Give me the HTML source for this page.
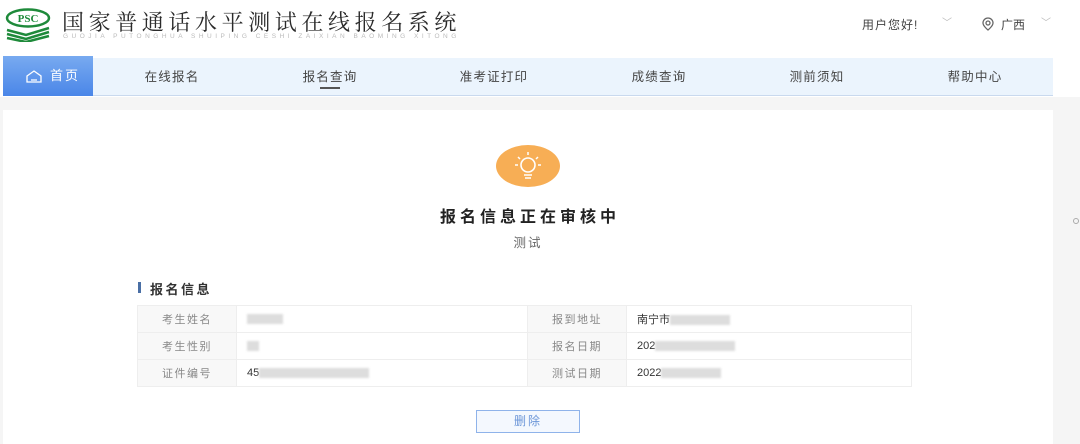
<!DOCTYPE html>
<html><head><meta charset="utf-8"><style>
*{margin:0;padding:0;box-sizing:border-box}
body{width:1080px;height:444px;overflow:hidden;background:#fff;font-family:"Liberation Sans","Noto Sans CJK SC",sans-serif;position:relative;color:#333}
.abs{position:absolute}
.nav{left:3px;top:58px;width:1050px;height:38px;background:#ebf4fd;border-bottom:1px solid #c9d9ee}
.home{left:3px;top:56px;width:90px;height:40px;background:linear-gradient(#78aaf0,#4a86e8);color:#fff;font-size:13px;line-height:40px;padding-left:47px;letter-spacing:2px}
.ni{top:58px;height:38px;line-height:38px;font-size:12.5px;color:#444;transform:translateX(-50%);letter-spacing:1.2px}
.gray{left:0;top:97px;width:1080px;height:347px;background:#f5f5f5}
.card{left:3px;top:110px;width:1050px;height:334px;background:#fff}
table{position:absolute;left:137px;top:305px;width:775px;border-collapse:collapse;font-size:11px}
td{border:1px solid #eeeeee;height:27px;padding-left:10px}
td.l{background:#f8f8f8;color:#888;text-align:center;padding:0;width:99px;letter-spacing:1.5px}
.blur{display:inline-block;background:#ddd;height:10px;vertical-align:middle;filter:blur(1px)}
</style></head><body>
<svg class="abs" style="left:4px;top:8px" width="48" height="34" viewBox="0 0 48 34">
<ellipse cx="24" cy="10" rx="21" ry="8.5" fill="none" stroke="#1e8a3a" stroke-width="2.5"/>
<text x="24" y="14" font-size="11" font-weight="bold" fill="#1e8a3a" text-anchor="middle" font-family="Liberation Serif,serif">PSC</text>
<path d="M3 22 L22 27 L45 20 M3 26 L22 31 L45 24 M3 30 L22 34 L45 28" stroke="#1e8a3a" stroke-width="2.5" fill="none"/>
</svg>
<div class="abs" style="left:62px;top:6px;font-size:22px;letter-spacing:4.6px;color:#2a2a2a;font-family:'Liberation Serif','Noto Serif CJK SC',serif;white-space:nowrap">国家普通话水平测试在线报名系统</div>
<div class="abs" style="left:63px;top:33px;font-size:6.5px;letter-spacing:3.5px;color:#bbb;white-space:nowrap">GUOJIA PUTONGHUA SHUIPING CESHI ZAIXIAN BAOMING XITONG</div>
<div class="abs" style="left:862px;top:16px;font-size:12px;color:#444;letter-spacing:1px">用户您好!</div>
<div class="abs" style="left:942px;top:14px;font-size:10px;color:#bbb">﹀</div>
<svg class="abs" style="left:981px;top:17px" width="14" height="14" viewBox="0 0 14 14"><path d="M7 1a5 5 0 0 1 5 5c0 3-5 7-5 7S2 9 2 6a5 5 0 0 1 5-5z" fill="none" stroke="#666" stroke-width="1.3"/><circle cx="7" cy="6" r="2" fill="none" stroke="#666" stroke-width="1.3"/></svg>
<div class="abs" style="left:1001px;top:16px;font-size:12px;color:#444">广西</div>
<div class="abs" style="left:1041px;top:14px;font-size:10px;color:#bbb">﹀</div>
<div class="abs nav"></div>
<div class="abs home">首页</div>
<svg class="abs" style="left:26px;top:70px" width="16" height="13" viewBox="0 0 16 13"><path d="M1 6 L8 1 L15 6 V12 H1 Z M5 10 H11" fill="none" stroke="#fff" stroke-width="1.3"/></svg>
<div class="abs ni" style="left:172px">在线报名</div>
<div class="abs ni" style="left:330px">报名查询</div>
<div class="abs" style="left:320px;top:87px;width:20px;height:2px;background:#555"></div>
<div class="abs ni" style="left:494px">准考证打印</div>
<div class="abs ni" style="left:659px">成绩查询</div>
<div class="abs ni" style="left:817px">测前须知</div>
<div class="abs ni" style="left:975px">帮助中心</div>
<div class="abs gray"></div>
<div class="abs card"></div>
<div class="abs" style="left:1073px;top:218px;width:6px;height:6px;border:1px solid #aaa;border-radius:50%"></div>
<svg class="abs" style="left:496px;top:145px" width="64" height="42" viewBox="0 0 64 42">
<ellipse cx="32" cy="21" rx="32" ry="21" fill="#f7ae55"/>
<circle cx="32" cy="20" r="7" fill="none" stroke="#fff" stroke-width="1.6"/>
<path d="M28 30h8M29 33h6M32 7v3M22 12l2 2M42 12l-2 2M19 20h3M42 20h3" stroke="#fff" stroke-width="1.5"/>
</svg>
<div class="abs" style="left:328px;top:203px;width:400px;text-align:center;font-size:16px;font-weight:bold;color:#222;letter-spacing:4px;padding-left:4px">报名信息正在审核中</div>
<div class="abs" style="left:428px;top:232px;width:200px;text-align:center;font-size:12.5px;color:#666;letter-spacing:2px">测试</div>
<div class="abs" style="left:138px;top:282px;width:3px;height:11px;background:#4a6fa5"></div>
<div class="abs" style="left:150px;top:279px;font-size:13px;font-weight:bold;color:#333;letter-spacing:2.5px">报名信息</div>
<table>
<tr><td class="l">考生姓名</td><td style="width:291px"><span class="blur" style="width:36px"></span></td><td class="l">报到地址</td><td>南宁市<span class="blur" style="width:60px"></span></td></tr>
<tr><td class="l">考生性别</td><td><span class="blur" style="width:12px"></span></td><td class="l">报名日期</td><td>202<span class="blur" style="width:80px"></span></td></tr>
<tr><td class="l">证件编号</td><td>45<span class="blur" style="width:110px"></span></td><td class="l">测试日期</td><td>2022<span class="blur" style="width:60px"></span></td></tr>
</table>
<div class="abs" style="left:476px;top:410px;width:104px;height:23px;border:1px solid #8fb3ea;background:#f4f8fe;color:#6c96d8;font-size:12px;text-align:center;line-height:21px;letter-spacing:2px">删除</div>
</body></html>
